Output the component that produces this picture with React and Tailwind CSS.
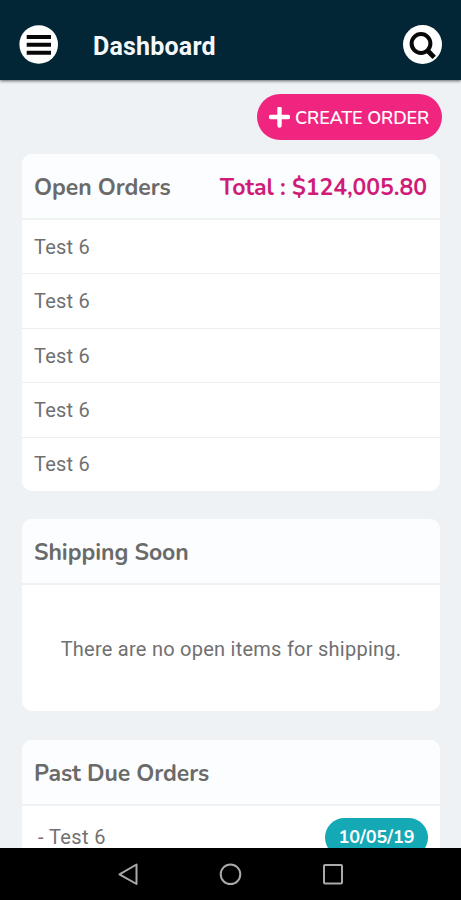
import React from 'react';

const MenuIcon = () => (
  <svg width="39" height="39" viewBox="0 0 39 39">
    <circle cx="19.7" cy="19.5" r="19.3" fill="#fff" />
    <path d="M7.7 12h24.3M7.7 19.8h24.3M7.7 27.7h24.3" stroke="#080808" strokeWidth="4" />
  </svg>
);

const SearchIcon = () => (
  <svg width="39" height="39" viewBox="0 0 39 39">
    <circle cx="19.5" cy="19.5" r="19.5" fill="#fff" />
    <circle cx="18" cy="18.5" r="9.4" fill="none" stroke="#080808" strokeWidth="4" />
    <path d="M24 25l7.2 7.4" stroke="#080808" strokeWidth="4.8" />
  </svg>
);

const PlusIcon = () => (
  <svg width="21" height="21" viewBox="0 0 21 21" className="shrink-0">
    <path d="M10.5 1.5v17M2 10h17" stroke="#fff" strokeWidth="4.4" strokeLinecap="round" />
  </svg>
);

const Card = ({ title, total, className = '', children }) => (
  <section className={`shrink-0 overflow-hidden rounded-[10px] bg-white ${className}`}>
    <div className="flex h-[66px] items-center justify-between border-b-2 border-[#eff2f3] bg-[#fbfdfe] pt-[5px] pr-[13px] pl-3 font-['Nunito','Lato',sans-serif] text-[23px] font-bold whitespace-nowrap text-[#6a6a6a]">
      <h2 className="tracking-[-0.05px]">{title}</h2>
      {total && <span className="tracking-[-0.05px] text-[#cf1c78]">Total : {total}</span>}
    </div>
    {children}
  </section>
);

const App = () => {
  const openOrders = ['Test 6', 'Test 6', 'Test 6', 'Test 6', 'Test 6'];

  return (
    <div className="flex h-[900px] w-full flex-col overflow-hidden bg-[#eef2f5] font-['Roboto',sans-serif]">
      {/* App bar */}
      <header className="z-10 flex h-20 shrink-0 items-center bg-[#022636] pt-[9px] pr-[19px] pl-[19px] shadow-[0_1px_3px_rgba(0,0,0,0.6)]">
        <MenuIcon />
        <h1 className="ml-[35px] pt-1 text-[25px] font-bold tracking-[0.2px] text-[#f4f8fa]">Dashboard</h1>
        <div className="ml-auto">
          <SearchIcon />
        </div>
      </header>

      <main className="flex min-h-0 flex-1 flex-col overflow-hidden pt-[14px] pr-[21px] pl-[22px]">
        <button className="-mr-0.5 flex h-[46px] w-[185px] shrink-0 items-center self-end rounded-full bg-[#f0257f] pl-3 whitespace-nowrap text-white">
          <PlusIcon />
          <span className="ml-[5px] pt-[3px] font-['Nunito','Lato',sans-serif] text-[18px] font-semibold tracking-[-0.1px]">CREATE ORDER</span>
        </button>

        <Card title="Open Orders" total="$124,005.80" className="mt-[14px] h-[337px]">
          <ul className="flex h-[271px] flex-col">
            {openOrders.map((order, index) => (
              <li
                key={index}
                className="flex flex-1 items-center border-b border-[#eceeef] pl-3 text-[20px] tracking-[0.2px] text-[#707070] last:border-b-0"
              >
                {order}
              </li>
            ))}
          </ul>
        </Card>

        <Card title="Shipping Soon" className="mt-7 h-[192px]">
          <p className="flex h-[126px] items-center justify-center pt-[2px] text-[20px] tracking-[0.25px] whitespace-nowrap text-[#707070]">
            There are no open items for shipping.
          </p>
        </Card>

        <Card title="Past Due Orders" className="mt-[29px] h-[160px]">
          <div className="flex items-start justify-between pt-3 pr-3 pl-4">
            <span className="pt-1 text-[20px] tracking-[0.4px] text-[#707070]">- Test 6</span>
            <span className="flex h-[39px] w-[103px] items-start justify-center rounded-full bg-[#14a9b5] pt-[7px] font-['Nunito','Lato',sans-serif] text-[18px] leading-[24px] font-bold text-white">
              10/05/19
            </span>
          </div>
        </Card>
      </main>

      {/* System navigation */}
      <nav className="flex h-[52px] shrink-0 items-center justify-center bg-black">
        <svg width="461" height="52" viewBox="0 0 461 52" fill="none" stroke="#aaa" strokeWidth="2" strokeLinejoin="round">
          <path d="M136.5 16.5v19.5L119.5 26.3z" />
          <circle cx="230.5" cy="26.3" r="9.8" />
          <rect x="324" y="17" width="18" height="18.5" rx="1" />
        </svg>
      </nav>
    </div>
  );
};

export default App;
